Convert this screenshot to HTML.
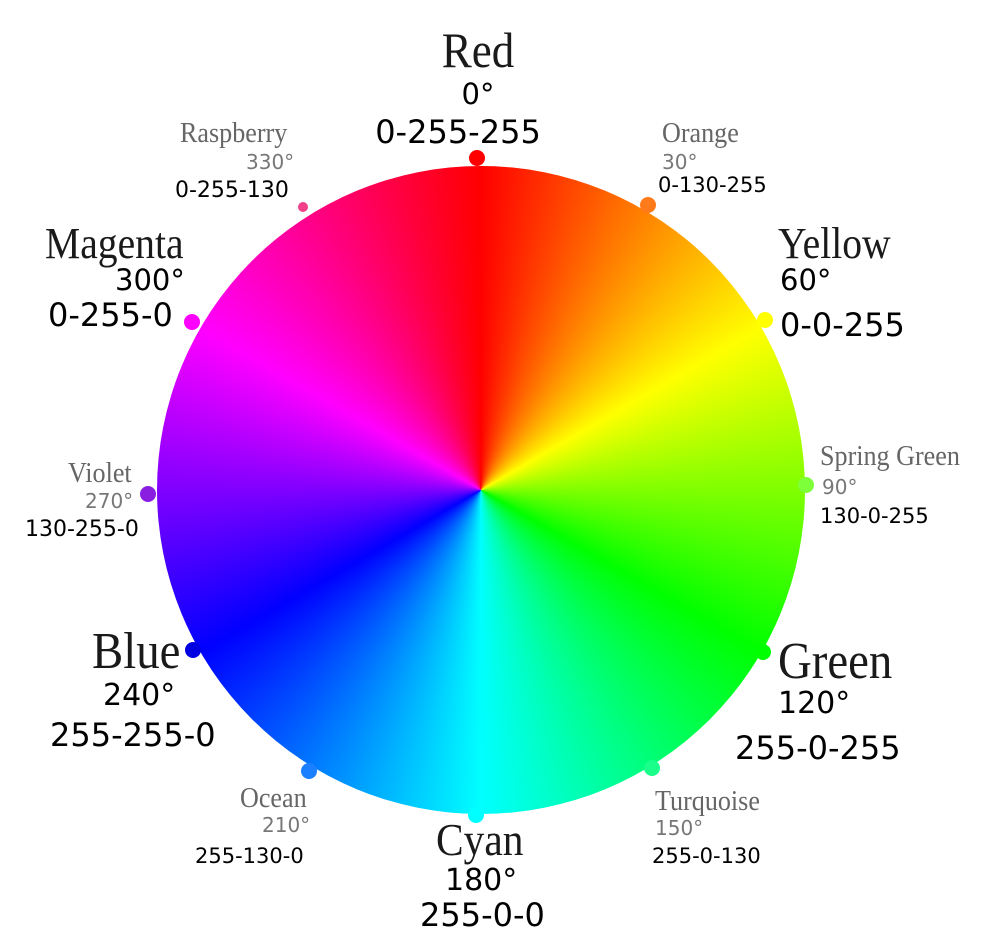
<!DOCTYPE html>
<html><head><meta charset="utf-8"><style>
html,body{margin:0;padding:0;background:#fff;}
body{width:995px;height:947px;position:relative;overflow:hidden;}
.w{position:absolute;left:157px;top:166px;width:648px;height:648px;border-radius:50%;
background:conic-gradient(from 0deg,#f00,#ff0 60deg,#0f0 120deg,#0ff 180deg,#00f 240deg,#f0f 300deg,#f00 360deg);}
.d{position:absolute;width:16px;height:16px;border-radius:50%;transform:translate(-50%,-50%);}
.t{position:absolute;line-height:1;white-space:nowrap;}
.s{font-family:"Liberation Serif",serif;color:#1a1a1a;transform:scaleX(0.9);transform-origin:left top;}
.g{font-family:"Liberation Serif",serif;color:#666;transform:scaleX(0.9);transform-origin:left top;}
.n{font-family:"DejaVu Sans",sans-serif;color:#000;}
.ng{font-family:"DejaVu Sans",sans-serif;color:#777;}
.c{transform:translateX(-50%);}
.sc{transform:translateX(-50%) scaleX(0.9);transform-origin:center top;}
</style></head><body>
<div class="w"></div>
<div class="d" style="left:477px;top:158px;background:#f00"></div>
<div class="d" style="left:303px;top:207px;width:10px;height:10px;background:#f0408a"></div>
<div class="d" style="left:648px;top:205px;background:#ff7a1a"></div>
<div class="d" style="left:192px;top:322px;background:#f0f"></div>
<div class="d" style="left:765px;top:320px;background:#ff0"></div>
<div class="d" style="left:148px;top:494px;background:#8a1ee0"></div>
<div class="d" style="left:806px;top:485px;background:#7dff3a"></div>
<div class="d" style="left:193px;top:650px;background:#0000e0"></div>
<div class="d" style="left:763px;top:652px;background:#0f0"></div>
<div class="d" style="left:309px;top:771px;background:#1a80ff"></div>
<div class="d" style="left:652px;top:768px;background:#1aff8a"></div>
<div class="d" style="left:476px;top:815px;background:#0ff"></div>

<div class="t s sc" style="left:478px;top:25px;font-size:50px">Red</div>
<div class="t n c" style="left:478px;top:80px;font-size:29px">0°</div>
<div class="t n c" style="left:458px;top:116px;font-size:32px">0-255-255</div>

<div class="t g" style="left:180px;top:119px;font-size:29px">Raspberry</div>
<div class="t ng" style="left:246px;top:152px;font-size:20px">330°</div>
<div class="t n" style="left:175px;top:180px;font-size:22px">0-255-130</div>

<div class="t g" style="left:662px;top:119px;font-size:29px">Orange</div>
<div class="t ng" style="left:662px;top:152px;font-size:20px">30°</div>
<div class="t n" style="left:658px;top:175px;font-size:21px">0-130-255</div>

<div class="t s" style="left:45px;top:222px;font-size:44px">Magenta</div>
<div class="t n" style="left:115px;top:266px;font-size:29px">300°</div>
<div class="t n" style="left:48px;top:299px;font-size:32px">0-255-0</div>

<div class="t s" style="left:778px;top:222px;font-size:44px">Yellow</div>
<div class="t n" style="left:780px;top:266px;font-size:29px">60°</div>
<div class="t n" style="left:780px;top:309px;font-size:32px">0-0-255</div>

<div class="t g" style="left:68px;top:459px;font-size:29px">Violet</div>
<div class="t ng" style="left:85px;top:491px;font-size:20px">270°</div>
<div class="t n" style="left:25px;top:519px;font-size:22px">130-255-0</div>

<div class="t g" style="left:820px;top:442px;font-size:29px">Spring Green</div>
<div class="t ng" style="left:822px;top:477px;font-size:20px">90°</div>
<div class="t n" style="left:820px;top:506px;font-size:21px">130-0-255</div>

<div class="t s" style="left:92px;top:626px;font-size:52px">Blue</div>
<div class="t n" style="left:103px;top:681px;font-size:30px">240°</div>
<div class="t n" style="left:50px;top:719px;font-size:32px">255-255-0</div>

<div class="t s" style="left:778px;top:636px;font-size:52px">Green</div>
<div class="t n" style="left:778px;top:689px;font-size:30px">120°</div>
<div class="t n" style="left:735px;top:732px;font-size:32px">255-0-255</div>

<div class="t g" style="left:240px;top:784px;font-size:29px">Ocean</div>
<div class="t ng" style="left:262px;top:815px;font-size:20px">210°</div>
<div class="t n" style="left:195px;top:846px;font-size:21px">255-130-0</div>

<div class="t g" style="left:655px;top:787px;font-size:29px">Turquoise</div>
<div class="t ng" style="left:655px;top:818px;font-size:20px">150°</div>
<div class="t n" style="left:652px;top:846px;font-size:21px">255-0-130</div>

<div class="t s" style="left:436px;top:817px;font-size:46px">Cyan</div>
<div class="t n" style="left:445px;top:866px;font-size:30px">180°</div>
<div class="t n" style="left:420px;top:899px;font-size:32px">255-0-0</div>
</body></html>
